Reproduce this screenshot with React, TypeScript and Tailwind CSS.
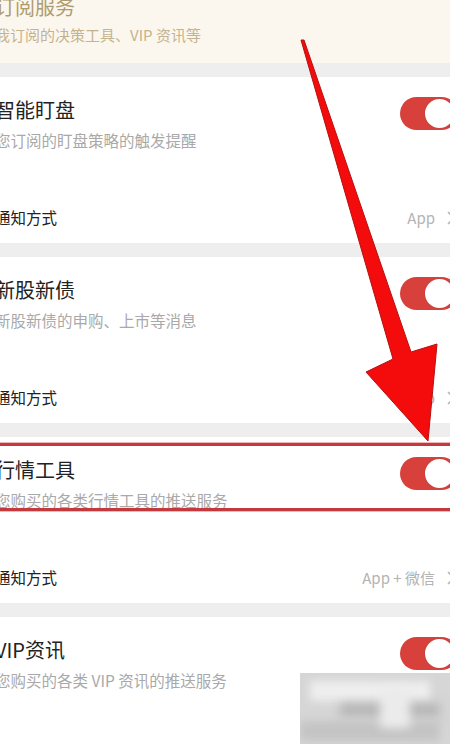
import React from "react";

const font = { fontFamily: '"Noto Sans CJK SC", "Noto Sans", sans-serif' };

function Toggle() {
  return (
    <div className="-mr-[8px] mt-[1px] flex h-[33px] w-[58px] shrink-0 items-center justify-end rounded-full bg-[#d8413b] pr-[4px]">
      <div className="h-[29px] w-[29px] rounded-full bg-white shadow-[0_0_0_1px_#c9443c]" />
    </div>
  );
}

function Chevron() {
  return (
    <svg width="10" height="16" viewBox="0 0 10 16" className="shrink-0">
      <path d="M2 2 L8 8 L2 14" fill="none" stroke="#b8b8b8" strokeWidth="1.6" />
    </svg>
  );
}

function Card({ title, desc, method }: { title: string; desc: string; method: string }) {
  return (
    <div className="flex h-[166px] flex-col bg-white">
      <div className="flex h-[116px] items-start justify-between pt-[19px]">
        <div className="-ml-[5px] flex flex-col gap-[5px]">
          <div className="whitespace-nowrap text-[20px] leading-[28px] text-[#222]">{title}</div>
          <div className="whitespace-nowrap text-[15.5px] leading-[22px] text-[#a9a9a9]">{desc}</div>
        </div>
        <Toggle />
      </div>
      <div className="flex h-[50px] items-center justify-between">
        <div className="-ml-[5px] whitespace-nowrap text-[15.5px] text-[#222]">通知方式</div>
        <div className="-mr-[6px] flex items-center gap-[11px]">
          <span className="whitespace-nowrap text-[15px] text-[#b3b3b3]">{method}</span>
          <Chevron />
        </div>
      </div>
    </div>
  );
}

function Sep() {
  return <div className="h-[14px] shrink-0 bg-[#eeeeee]" />;
}

export default function App() {
  return (
    <div className="relative flex h-[744px] w-[450px] flex-col overflow-hidden bg-[#eeeeee]" style={font}>
      <div className="flex h-[63px] shrink-0 flex-col bg-[#fcf7ee]">
        <div className="-ml-[5px] -mt-[7px] flex flex-col gap-[3px]">
          <div className="whitespace-nowrap text-[20px] leading-[28px] text-[#ad9c6e]">订阅服务</div>
          <div className="whitespace-nowrap text-[15px] leading-[22px] text-[#c4b38f]">我订阅的决策工具、VIP 资讯等</div>
        </div>
      </div>
      <Sep />
      <Card title="智能盯盘" desc="您订阅的盯盘策略的触发提醒" method="App" />
      <Sep />
      <Card title="新股新债" desc="新股新债的申购、上市等消息" method="App" />
      <Sep />
      <Card title="行情工具" desc="您购买的各类行情工具的推送服务" method="App + 微信" />
      <Sep />
      <Card title="VIP资讯" desc="您购买的各类 VIP 资讯的推送服务" method="App" />

      {/* highlight box */}
      <div className="absolute left-[-10px] right-[-10px] top-[443px] h-[68px] border-y-[3px] border-[#c23a3d] shadow-[0_-1px_0_#f3b5b5,0_1px_0_#f3b5b5]" />

      {/* blurred watermark */}
      <div className="absolute left-[300px] top-[673px] h-[71px] w-[150px] overflow-hidden bg-[#d6d6d6]">
        <div className="absolute left-[10px] top-[8px] h-[20px] w-[120px] bg-[#eeeeee] blur-[4px]" />
        <div className="absolute left-[40px] top-[30px] h-[14px] w-[100px] bg-[#b8b8b8] blur-[5px]" />
        <div className="absolute left-[0px] top-[48px] h-[20px] w-[140px] bg-[#c4c4c4] blur-[4px]" />
        <div className="absolute left-[80px] top-[15px] h-[40px] w-[30px] bg-[#ebebeb] blur-[5px]" />
      </div>

      {/* arrow */}
      <svg className="pointer-events-none absolute left-0 top-0" width="450" height="744" viewBox="0 0 450 744">
        <polygon
          points="301,40 304,40 411,352 437,344 428,441 366,372 393,359"
          fill="#f40c0c"
          stroke="#b51010"
          strokeWidth="1"
          strokeLinejoin="round"
        />
      </svg>
    </div>
  );
}
